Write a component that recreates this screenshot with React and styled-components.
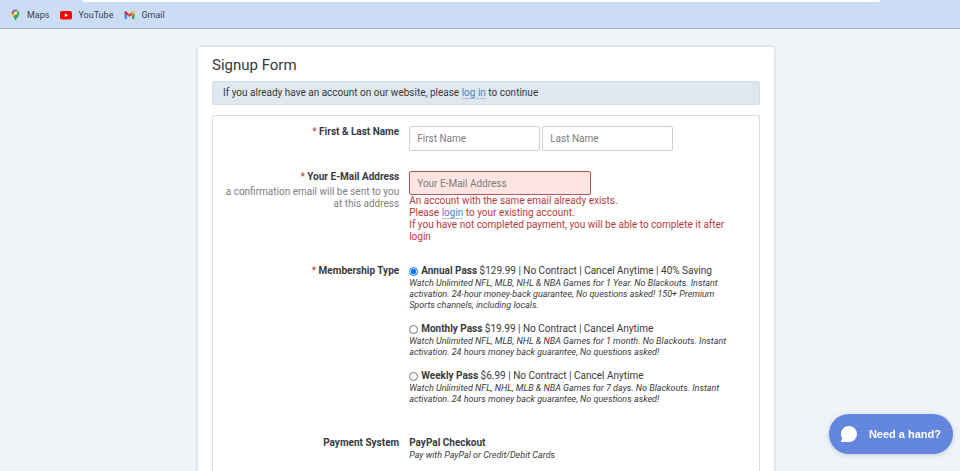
import React from "react";
import styled, { createGlobalStyle } from "styled-components";

const GlobalStyle = createGlobalStyle`
  *, *::before, *::after { box-sizing: border-box; }
  body {
    margin: 0;
    background: #f0f3f8;
    color: #3a3a3a;
    font: 10px/12px Roboto, sans-serif;
  }
`;

const Page = styled.div`
  display: flex;
  flex-direction: column;
  min-height: 100vh;
`;

const BookmarksBar = styled.header`
  height: 29px;
  background: #cbdcf5;
  border-bottom: 1px solid #a9b6d3;
`;

const AddressEdge = styled.div`
  height: 2px;
  margin: 0 80px 0 82px;
  background: #fbfcfe;
  border-radius: 0 0 6px 6px;
`;

const Bookmarks = styled.nav`
  display: flex;
  gap: 11px;
  padding: 7px 10px;
`;

const Bookmark = styled.a`
  display: flex;
  align-items: center;
  gap: 6px;
  height: 12px;
  color: #3c4350;
  font: 9px/12px Roboto, sans-serif;
  text-decoration: none;

  svg { display: block; }
`;

const Content = styled.div`
  flex: 1;
  display: flex;
  justify-content: center;
  padding: 18px 0 0 12px;
`;

const Card = styled.main`
  display: flex;
  flex-direction: column;
  width: 100%;
  max-width: 576px;
  padding: 9px 14px 0;
  background: #fff;
  box-shadow: 0 0 3px rgba(60, 80, 110, 0.25);
`;

const Title = styled.h1`
  margin: 0 0 7px;
  font-size: 15px;
  line-height: 18px;
  font-weight: 400;
`;

const Notice = styled.p`
  margin: 0 0 10px;
  padding: 5px 10px;
  border: 1px solid #d3dde6;
  border-radius: 2px;
  background: #dfe8f0;
`;

const Link = styled.a`
  color: #4a86bd;
  text-decoration: none;
  border-bottom: 1px solid #a9c4dd;
`;

const Form = styled.form`
  flex: 1;
  padding: 10px 14px 0 0;
  border: 1px solid #dcdcdc;
  border-bottom: 0;
  border-radius: 2px 2px 0 0;
`;

const Row = styled.div`
  display: grid;
  grid-template-columns: 35% 1fr;
  gap: 10px;
  margin-bottom: ${(p) => p.$after || 20}px;
`;

const LabelCell = styled.div`
  padding-left: 10px;
  text-align: right;
`;

const Label = styled.label`
  display: block;
  font-weight: 700;
`;

const Required = styled.span`
  color: #b03a3a;
  font-weight: 400;
`;

const Hint = styled.div`
  margin-top: 3px;
  color: #808080;
`;

const Inputs = styled.div`
  display: flex;
  gap: 2px;
`;

const TextInput = styled.input`
  width: ${(p) => (p.$wide ? 182 : 131)}px;
  height: ${(p) => (p.$wide ? 24 : 25)}px;
  padding: 0 7px;
  border: 1px solid ${(p) => (p.$invalid ? "#b85454" : "#d0d0d0")};
  border-radius: 2px;
  background: ${(p) => (p.$invalid ? "#ffe4e4" : "#fff")};
  font: 10px/12px Roboto, sans-serif;

  &::placeholder { color: #7c7c7c; opacity: 1; }
`;

const ErrorText = styled.div`
  color: #b53a3a;
`;

const Options = styled.div`
  display: flex;
  flex-direction: column;
  gap: 12px;
`;

const OptionLabel = styled.label`
  display: flex;
  align-items: center;
  gap: 3px;
  height: 12px;
`;

const Radio = styled.input`
  width: 9px;
  height: 9px;
  margin: 1px 0 0;
`;

const Description = styled.div`
  margin-top: 1px;
  padding-right: 6px;
  font-size: 9px;
  line-height: 11px;
  font-style: italic;
`;

const ChatButton = styled.button`
  position: fixed;
  right: 7px;
  bottom: 17px;
  display: flex;
  align-items: center;
  gap: 12px;
  height: 40px;
  padding: 0 12px;
  border: 0;
  border-radius: 20px;
  background: #6387df;
  color: #fff;
  font: bold 11px/14px "Liberation Sans", sans-serif;
  box-shadow: 0 1px 4px rgba(60, 80, 130, 0.25);
`;

const MapsIcon = () => (
  <svg width="11" height="12" viewBox="0 0 11 12" aria-hidden="true">
    <path d="M5.5 0.5A3.8 3.8 0 0 0 2.6 1.8L5.5 4.3 8 1.3A3.8 3.8 0 0 0 5.5.5Z" fill="#4285f4" />
    <path d="M2.6 1.8A3.8 3.8 0 0 0 2 5.7L5 3Z" fill="#ea4335" />
    <path d="M2 5.7 3.4 7.9 8.8 2.1 8 1.3Z" fill="#fbbc04" />
    <path d="M8.8 2.1 3.4 7.9C4.5 9.1 4.9 10 5.5 11.7 6.2 9.5 9.3 7.3 9.3 4.3 9.3 3.5 9.1 2.7 8.8 2.1Z" fill="#34a853" />
    <circle cx="5.5" cy="4.2" r="1.4" fill="#fff" />
  </svg>
);

const YouTubeIcon = () => (
  <svg width="12" height="12" viewBox="0 0 12 12" aria-hidden="true">
    <rect x="0" y="2" width="12" height="8.4" rx="2" fill="#f00" />
    <path d="M4.8 4.4 8 6.2 4.8 8Z" fill="#fff" />
  </svg>
);

const GmailIcon = () => (
  <svg width="11" height="12" viewBox="0 0 11 12" aria-hidden="true">
    <path d="M.5 4 3 5.8V10H1.2A.7.7 0 0 1 .5 9.3Z" fill="#4285f4" />
    <path d="M8 5.8 10.5 4V9.3A.7.7 0 0 1 9.8 10H8Z" fill="#34a853" />
    <path d="M3 3.2 5.5 5.1 8 3.2V6L5.5 7.9 3 6Z" fill="#ea4335" />
    <path d="M.5 3.4C.5 2.2 1.8 1.8 2.6 2.8L3 3.2V6L.5 4.1Z" fill="#c5221f" />
    <path d="M10.5 3.4C10.5 2.2 9.2 1.8 8.4 2.8L8 3.2V6L10.5 4.1Z" fill="#fbbc04" />
  </svg>
);

const ChatIcon = () => (
  <svg width="16" height="16" viewBox="0 0 16 16" aria-hidden="true">
    <path d="M8 0A8 8 0 0 1 8 16H0V14.4L1.5 12.7A8 8 0 0 1 8 0Z" fill="#fff" />
  </svg>
);

const bookmarks = [
  { name: "Maps", Icon: MapsIcon },
  { name: "YouTube", Icon: YouTubeIcon },
  { name: "Gmail", Icon: GmailIcon },
];

const passes = [
  {
    id: "annual",
    name: "Annual Pass",
    terms: "$129.99 | No Contract | Cancel Anytime | 40% Saving",
    text: "Watch Unlimited NFL, MLB, NHL & NBA Games for 1 Year. No Blackouts. Instant activation. 24-hour money-back guarantee, No questions asked! 150+ Premium Sports channels, including locals.",
  },
  {
    id: "monthly",
    name: "Monthly Pass",
    terms: "$19.99 | No Contract | Cancel Anytime",
    text: "Watch Unlimited NFL, MLB, NHL & NBA Games for 1 month. No Blackouts. Instant activation. 24 hours money back guarantee, No questions asked!",
  },
  {
    id: "weekly",
    name: "Weekly Pass",
    terms: "$6.99 | No Contract | Cancel Anytime",
    text: "Watch Unlimited NFL, NHL, MLB & NBA Games for 7 days. No Blackouts. Instant activation. 24 hours money back guarantee, No questions asked!",
  },
];

export default function App() {
  return (
    <Page>
      <GlobalStyle />
      <BookmarksBar>
        <AddressEdge />
        <Bookmarks>
          {bookmarks.map(({ name, Icon }) => (
            <Bookmark key={name} href="#">
              <Icon />
              {name}
            </Bookmark>
          ))}
        </Bookmarks>
      </BookmarksBar>
      <Content>
        <Card>
          <Title>Signup Form</Title>
          <Notice>
            If you already have an account on our website, please <Link href="#">log in</Link> to continue
          </Notice>
          <Form>
            <Row>
              <LabelCell>
                <Label htmlFor="first"><Required>*</Required> First &amp; Last Name</Label>
              </LabelCell>
              <Inputs>
                <TextInput id="first" placeholder="First Name" />
                <TextInput aria-label="Last Name" placeholder="Last Name" />
              </Inputs>
            </Row>
            <Row $after={22}>
              <LabelCell>
                <Label htmlFor="email"><Required>*</Required> Your E-Mail Address</Label>
                <Hint>a confirmation email will be sent to you at this address</Hint>
              </LabelCell>
              <div>
                <Inputs>
                  <TextInput id="email" type="email" placeholder="Your E-Mail Address" $wide $invalid />
                </Inputs>
                <ErrorText>
                  An account with the same email already exists.<br />
                  Please <Link href="#">login</Link> to your existing account.<br />
                  If you have not completed payment, you will be able to complete it after login
                </ErrorText>
              </div>
            </Row>
            <Row $after={32}>
              <LabelCell>
                <Label as="div" id="membership"><Required>*</Required> Membership Type</Label>
              </LabelCell>
              <Options role="radiogroup" aria-labelledby="membership">
                {passes.map((pass) => (
                  <div key={pass.id}>
                    <OptionLabel>
                      <Radio type="radio" name="pass" value={pass.id} defaultChecked={pass.id === "annual"} />
                      <span><b>{pass.name}</b> {pass.terms}</span>
                    </OptionLabel>
                    <Description>{pass.text}</Description>
                  </div>
                ))}
              </Options>
            </Row>
            <Row>
              <LabelCell>
                <Label as="div">Payment System</Label>
              </LabelCell>
              <div>
                <b>PayPal Checkout</b>
                <Description>Pay with PayPal or Credit/Debit Cards</Description>
              </div>
            </Row>
          </Form>
        </Card>
      </Content>
      <ChatButton type="button">
        <ChatIcon />
        Need a hand?
      </ChatButton>
    </Page>
  );
}
